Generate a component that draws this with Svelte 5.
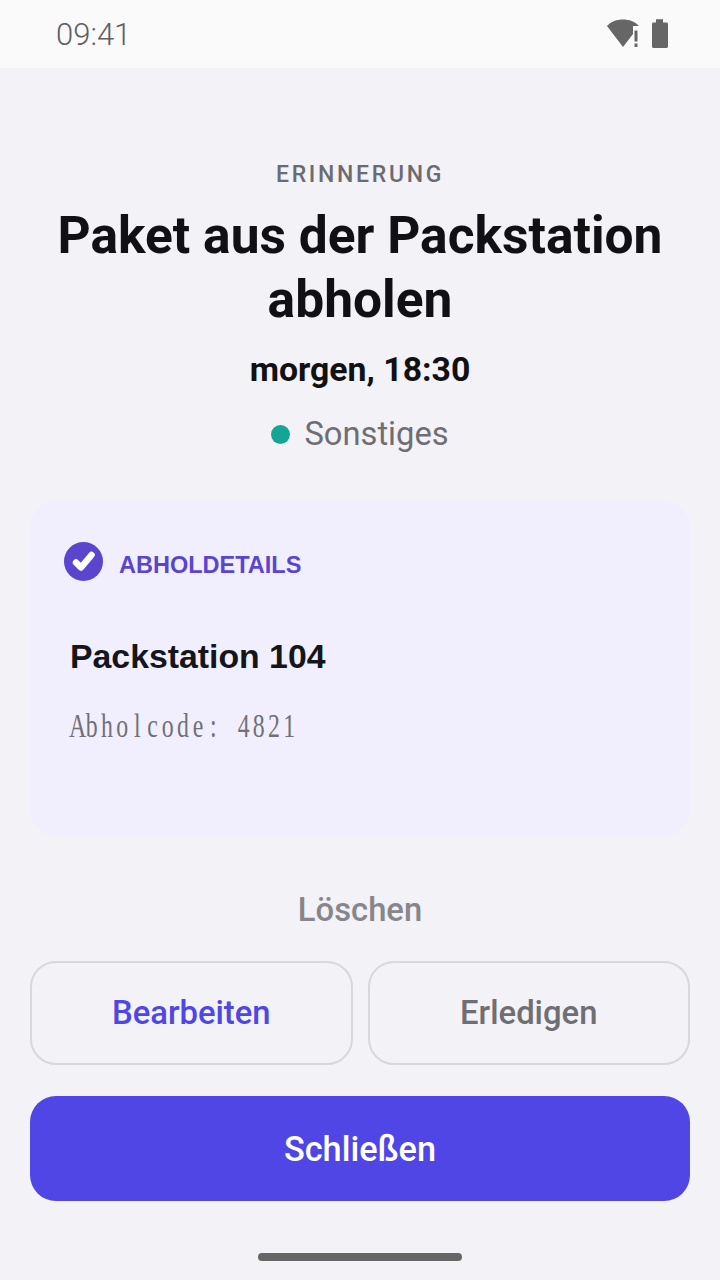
<script>
  let place = "Packstation 104";
  let code = "4821";
  // mono cells for the serif code line
  let codeChars = `Abholcode: ${code}`.split("");
</script>

<div class="screen">
  <div class="status-bar">
    <span class="clock">09:41</span>
    <div class="status-icons">
      <svg class="wifi" width="34" height="30" viewBox="0 0 34 30">
        <path d="M0 7C4 2.500 10 .5 16 .5C22 .5 28 2.500 32 7L26 7L26 15L16 28Z" fill="#666" />
        <rect x="27.500" y="11.500" width="3" height="11" fill="#666" />
        <rect x="27.500" y="24.500" width="3" height="3.500" fill="#666" />
      </svg>
      <svg class="battery" width="18" height="30" viewBox="0 0 18 30">
        <path d="M5 .3H12V3.500H15.500C16.300 3.500 17 4.200 17 5V27.500C17 28.300 16.300 29 15.500 29H2.500C1.700 29 1 28.300 1 27.500V5C1 4.200 1.700 3.500 2.500 3.500H5Z" fill="#666" />
      </svg>
    </div>
  </div>

  <main class="content">
    <div class="eyebrow">ERINNERUNG</div>
    <h1>Paket aus der Packstation abholen</h1>
    <div class="when">morgen, 18:30</div>
    <div class="category">
      <span class="dot"></span>
      <span>Sonstiges</span>
    </div>

    <section class="details">
      <div class="details-head">
        <svg width="40" height="40" viewBox="0 0 40 40">
          <circle cx="19.500" cy="19.500" r="19.500" fill="#5b45cf" />
          <path d="M12 20.500L17 25.500L27.500 13" fill="none" stroke="#fff" stroke-width="6.500" stroke-linecap="round" stroke-linejoin="round" />
        </svg>
        <span class="head-label">ABHOLDETAILS</span>
      </div>
      <div class="place">{place}</div>
      <div class="code">
        {#each codeChars as ch}
          <span class="cell">{ch}</span>
        {/each}
      </div>
    </section>

    <div class="delete">Löschen</div>
    <div class="actions">
      <button class="outline edit">Bearbeiten</button>
      <button class="outline done">Erledigen</button>
    </div>
    <button class="primary">Schließen</button>
  </main>

  <div class="nav-bar"><span class="handle"></span></div>
</div>

<style>
  :global(body) {
    margin: 0;
    background: #f2f2f7;
  }

  .screen {
    width: 720px;
    height: 1280px;
    display: flex;
    flex-direction: column;
    background: #f2f2f7;
    font-family: Roboto, sans-serif;
    overflow: hidden;
  }

  .status-bar {
    height: 68px;
    flex: none;
    display: flex;
    align-items: center;
    justify-content: space-between;
    padding: 0 51px 0 56px;
    background: #fafafa;
  }

  .clock {
    font-size: 31px;
    font-weight: 300;
    color: #5f5f5f;
  }

  .status-icons {
    display: flex;
    align-items: center;
    gap: 10px;
  }

  .content {
    flex: 1;
    display: flex;
    flex-direction: column;
    align-items: stretch;
    padding: 93px 30px 0;
    text-align: center;
  }

  .eyebrow {
    font-size: 23px;
    line-height: 28px;
    font-weight: 500;
    letter-spacing: 2.700px;
    color: #6b6b70;
  }

  h1 {
    margin: 15px 0 0;
    font-size: 51.5px;
    line-height: 64px;
    font-weight: 700;
    color: #111114;
  }

  .when {
    margin-top: 16px;
    font-size: 33.8px;
    line-height: 44px;
    font-weight: 700;
    color: #111114;
  }

  .category {
    margin-top: 21px;
    display: flex;
    align-items: center;
    justify-content: center;
    gap: 14px;
    font-size: 32.7px;
    line-height: 42px;
    color: #6e6e73;
  }

  .dot {
    width: 19px;
    height: 19px;
    border-radius: 50%;
    background: #14a594;
  }

  .details {
    margin-top: 45px;
    height: 337px;
    box-sizing: border-box;
    padding: 42px 34px;
    border-radius: 28px;
    background: #f1effe;
    text-align: left;
  }

  .details-head {
    display: flex;
    align-items: center;
    gap: 15px;
    font-family: "Liberation Sans", sans-serif;
    font-size: 23.5px;
    font-weight: 700;
    color: #5b45cf;
  }

  .head-label {
    margin-top: 6px;
  }

  .place {
    margin: 52px 0 0 6px;
    font-family: "Liberation Sans", sans-serif;
    font-size: 33.8px;
    line-height: 44px;
    font-weight: 700;
    color: #15151c;
  }

  .code {
    margin: 30px 0 0 5px;
    width: 340px;
    display: flex;
    transform: scaleX(0.7);
    transform-origin: left center;
    font-family: "Liberation Serif", serif;
    font-size: 34px;
    line-height: 36px;
    color: #707076;
  }

  .cell {
    flex: none;
    width: 21.700px;
    text-align: center;
    white-space: pre;
  }

  .delete {
    margin-top: 52px;
    font-size: 32.8px;
    line-height: 42px;
    font-weight: 500;
    color: #86868b;
  }

  .actions {
    margin-top: 30px;
    display: flex;
    gap: 15px;
  }

  button {
    font-family: inherit;
    font-weight: 500;
    font-size: 32.8px;
    cursor: pointer;
  }

  .outline {
    flex: 1;
    height: 104px;
    border: 2px solid #d8d8dc;
    border-radius: 26px;
    background: transparent;
  }

  .edit {
    color: #4f46e5;
  }

  .done {
    color: #6e6e73;
  }

  .primary {
    margin-top: 31px;
    height: 105px;
    border: none;
    border-radius: 26px;
    background: #4f46e5;
    color: #fff;
    font-size: 34.3px;
  }

  .nav-bar {
    height: 79px;
    flex: none;
    display: flex;
    justify-content: center;
    align-items: flex-end;
    padding-bottom: 19px;
    box-sizing: border-box;
  }

  .handle {
    width: 204px;
    height: 8px;
    border-radius: 4px;
    background: #666;
  }
</style>
